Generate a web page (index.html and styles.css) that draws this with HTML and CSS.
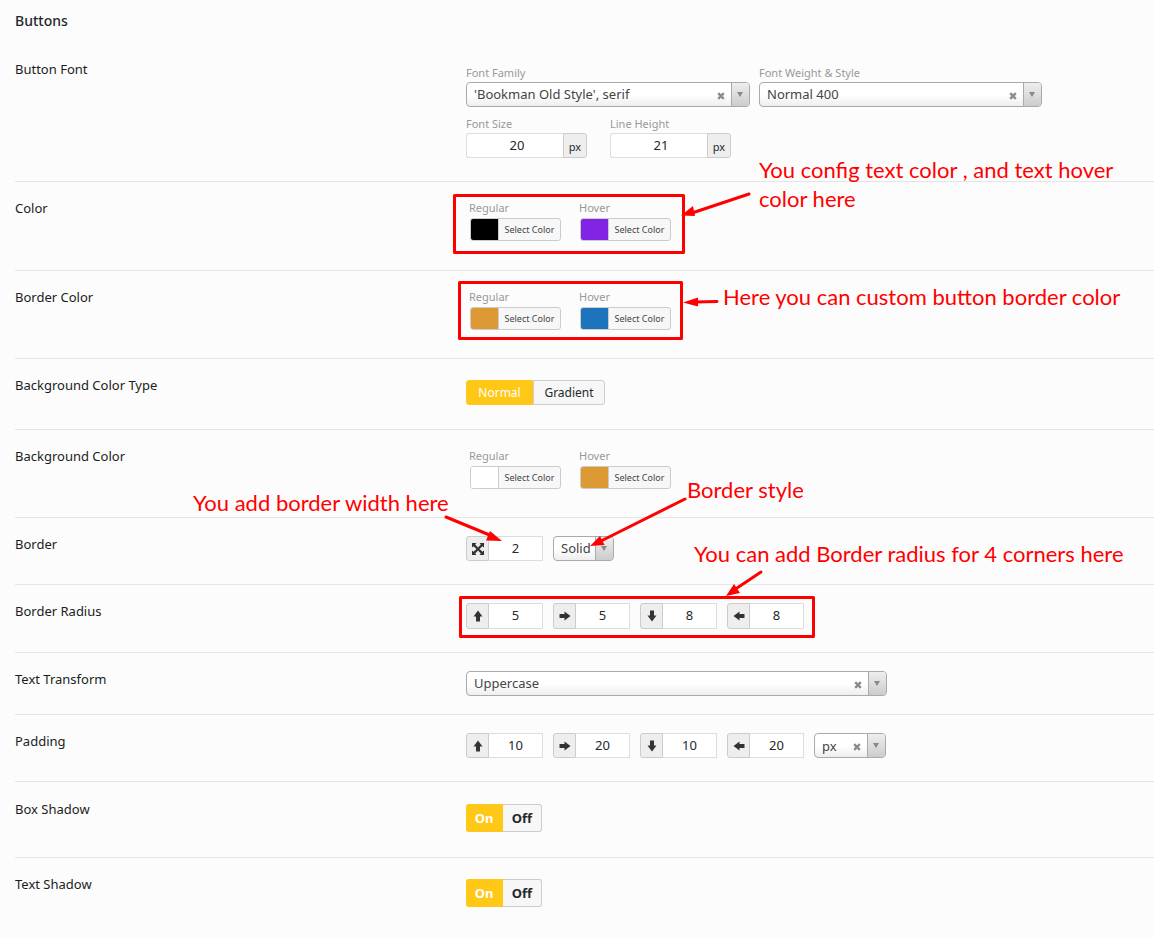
FILE: index.html
```html
<!DOCTYPE html>
<html lang="en">
<head>
<meta charset="utf-8">
<title>Buttons</title>
<link rel="stylesheet" href="styles.css">
</head>
<body>
<svg class="defs" aria-hidden="true">
  <symbol id="arrow" viewBox="0 0 12 12"><path d="M6 .5 10.500 6.500H8v5H4v-5H1.500Z"/></symbol>
  <symbol id="expand" viewBox="0 0 12 12"><path d="M0 0h4.500L3.200 1.500 6 4.500 8.800 1.500 7.500 0H12v4.500L10.500 3.200 7.500 6l3 2.800L12 7.500V12H7.500l1.300-1.500L6 7.500l-2.800 3L4.500 12H0V7.500l1.500 1.300L4.500 6l-3-2.800L0 4.500Z"/></symbol>
  <symbol id="cross" viewBox="0 0 8 8"><path d="M1.200 1.200 6.800 6.800M6.800 1.200 1.200 6.800" stroke="currentColor" stroke-width="2.400"/></symbol>
  <symbol id="caret" viewBox="0 0 6 5"><path d="M0 0h6L3 5Z"/></symbol>
</svg>
<main class="panel">
  <h1 class="title">Buttons</h1>

  <section class="row font-row">
    <h2 class="name">Button Font</h2>
    <div class="fonts">
      <div class="line">
        <div class="field wide">
          <label for="family">Font Family</label>
          <div class="picker"><select id="family"><option>'Bookman Old Style', serif</option></select><button class="clear" aria-label="Clear font family"><svg><use href="#cross"/></svg></button><span class="drop"><svg><use href="#caret"/></svg></span></div>
        </div>
        <div class="field wide">
          <label for="weight">Font Weight &amp; Style</label>
          <div class="picker"><select id="weight"><option>Normal 400</option></select><button class="clear" aria-label="Clear font weight"><svg><use href="#cross"/></svg></button><span class="drop"><svg><use href="#caret"/></svg></span></div>
        </div>
      </div>
      <div class="line sizes">
        <div class="field">
          <label for="size">Font Size</label>
          <div class="unit"><input id="size" value="20"><span>px</span></div>
        </div>
        <div class="field">
          <label for="lh">Line Height</label>
          <div class="unit"><input id="lh" value="21"><span>px</span></div>
        </div>
      </div>
    </div>
  </section>

  <section class="row tall">
    <h2 class="name">Color</h2>
    <div class="colors">
      <div class="field"><span class="cap">Regular</span><button class="color black"><i></i><span>Select Color</span></button></div>
      <div class="field"><span class="cap">Hover</span><button class="color purple"><i></i><span>Select Color</span></button></div>
    </div>
  </section>

  <section class="row">
    <h2 class="name">Border Color</h2>
    <div class="colors">
      <div class="field"><span class="cap">Regular</span><button class="color orange"><i></i><span>Select Color</span></button></div>
      <div class="field"><span class="cap">Hover</span><button class="color blue"><i></i><span>Select Color</span></button></div>
    </div>
  </section>

  <section class="row switch-row">
    <h2 class="name">Background Color Type</h2>
    <div class="toggle"><button class="on">Normal</button><button>Gradient</button></div>
  </section>

  <section class="row">
    <h2 class="name">Background Color</h2>
    <div class="colors">
      <div class="field"><span class="cap">Regular</span><button class="color white"><i></i><span>Select Color</span></button></div>
      <div class="field"><span class="cap">Hover</span><button class="color orange"><i></i><span>Select Color</span></button></div>
    </div>
  </section>

  <section class="row">
    <h2 class="name">Border</h2>
    <div class="group">
      <label class="spin"><span><svg><use href="#expand"/></svg></span><input aria-label="Border width" value="2"></label>
      <div class="picker style"><select aria-label="Border style"><option>Solid</option></select><span class="drop"><svg><use href="#caret"/></svg></span></div>
    </div>
  </section>

  <section class="row">
    <h2 class="name">Border Radius</h2>
    <div class="group radius">
      <label class="spin"><span><svg><use href="#arrow"/></svg></span><input aria-label="Radius top" value="5"></label>
      <label class="spin right"><span><svg><use href="#arrow"/></svg></span><input aria-label="Radius right" value="5"></label>
      <label class="spin down"><span><svg><use href="#arrow"/></svg></span><input aria-label="Radius bottom" value="8"></label>
      <label class="spin left"><span><svg><use href="#arrow"/></svg></span><input aria-label="Radius left" value="8"></label>
    </div>
  </section>

  <section class="row short">
    <h2 class="name">Text Transform</h2>
    <div class="picker transform"><select aria-label="Text transform"><option>Uppercase</option></select><button class="clear" aria-label="Clear text transform"><svg><use href="#cross"/></svg></button><span class="drop"><svg><use href="#caret"/></svg></span></div>
  </section>

  <section class="row">
    <h2 class="name">Padding</h2>
    <div class="group">
      <label class="spin"><span><svg><use href="#arrow"/></svg></span><input aria-label="Padding top" value="10"></label>
      <label class="spin right"><span><svg><use href="#arrow"/></svg></span><input aria-label="Padding right" value="20"></label>
      <label class="spin down"><span><svg><use href="#arrow"/></svg></span><input aria-label="Padding bottom" value="10"></label>
      <label class="spin left"><span><svg><use href="#arrow"/></svg></span><input aria-label="Padding left" value="20"></label>
      <div class="picker px"><select aria-label="Padding unit"><option>px</option></select><button class="clear" aria-label="Clear unit"><svg><use href="#cross"/></svg></button><span class="drop"><svg><use href="#caret"/></svg></span></div>
    </div>
  </section>

  <section class="row shadow-row">
    <h2 class="name">Box Shadow</h2>
    <div class="toggle bold"><button class="on">On</button><button>Off</button></div>
  </section>

  <section class="row shadow-row last">
    <h2 class="name">Text Shadow</h2>
    <div class="toggle bold"><button class="on">On</button><button>Off</button></div>
  </section>
</main>

<svg class="marks" width="1154" height="938" aria-hidden="true">
  <g fill="none" stroke="#f00" stroke-width="3" stroke-linejoin="round">
    <rect x="454.500" y="195.500" width="229" height="57"/>
    <rect x="459.500" y="282.500" width="222" height="56"/>
    <rect x="460.500" y="597.500" width="353" height="39"/>
    <g stroke-linecap="round">
      <path d="M749 194 692 213M717 301.500l-22 .5M446 517l46 19M685 499l-84 42M761 572l-24 16"/>
    </g>
  </g>
  <g fill="#f00">
    <path d="m681 215.500 12-9.500 2 10Z"/>
    <path d="m683 302.500 15-5v9Z"/>
    <path d="m502 541-16-.5 4-9.500Z"/>
    <path d="m590 546 10-10 4.500 9Z"/>
    <path d="m726 596 8-12 6 9Z"/>
  </g>
</svg>
<p class="note n1">You config text color , and text hover<br>color here</p>
<p class="note n2">Here you can custom button border color</p>
<p class="note n3">You add border width here</p>
<p class="note n4">Border style</p>
<p class="note n5">You can add Border radius for 4 corners here</p>
</body>
</html>
```

FILE: styles.css
```css
* { box-sizing: border-box; }
body {
  margin: 0;
  position: relative;
  overflow-x: hidden;
  background: #fcfcfc;
  color: #23282d;
  font: 13px/20px "Noto Sans", "Open Sans", sans-serif;
}
button, input, select { font: inherit; color: inherit; margin: 0; padding: 0; border: 0; background: none; }
svg { display: block; fill: currentColor; }
.defs { display: none; }

.panel { padding: 11px 0 0 15px; }
.title { margin: 0 0 12px; font-size: 14px; line-height: 20px; font-weight: 500; }
.row {
  display: grid;
  grid-template-columns: 451px minmax(0, 1fr);
  align-items: start;
  justify-items: start;
  padding: 18px 0 23px;
  border-bottom: 1px solid #e5e5e5;
}
.name { margin: -2px 0 0; font-size: 13px; line-height: 20px; font-weight: 400; color: #1a1d21; }
.tall { padding-bottom: 24px; }
.short { padding-bottom: 18px; }
.switch-row { padding: 21px 0 24px; }
.switch-row .name { margin-top: -5px; }
.shadow-row { padding: 22px 0 25px; }
.shadow-row .name { margin-top: -5px; }
.last { padding-top: 21px; border-bottom: 0; }
.font-row { padding-top: 22px; }
.font-row .name { margin-top: -6px; }

.line { display: flex; gap: 9px; }
.sizes { gap: 23px; margin-top: 9px; }
.field label, .cap { display: block; font-size: 11px; line-height: 16px; color: #999; }
.fonts .field label { margin-bottom: 1px; }
.wide { width: 284px; }
.wide + .wide { width: 283px; }

.picker {
  display: flex;
  height: 25px;
  border: 1px solid #aaa;
  border-radius: 4px;
  overflow: hidden;
  color: #444;
  background: linear-gradient(#fff 0%, #fff 50%, #eee 100%);
}
.picker select { flex: 1; min-width: 0; padding: 0 0 2px 7px; appearance: none; outline: 0; }
.px select { padding-bottom: 0; }
.clear { width: 20px; padding: 3px 6px 0; color: #8c8c8c; }
.clear svg { width: 8px; height: 8px; }
.drop { display: grid; place-items: center; width: 18px; padding-right: 1px; border-left: 1px solid #aaa; background: linear-gradient(#eee, #ccc); color: #888; }
.drop svg { width: 6px; height: 5px; }
.transform { width: 421px; }
.style { width: 61px; }
.px { width: 72px; }

.unit { display: flex; width: 121px; height: 25px; }
.unit input { flex: 1; min-width: 0; text-align: center; background: #fff; border: 1px solid #ddd; border-right: 0; border-radius: 3px 0 0 3px; padding: 0 0 2px 4px; }
.unit span { width: 24px; text-align: center; font-size: 11px; line-height: 25px; background: #eee; border: 1px solid #ccc; border-radius: 0 3px 3px 0; }

.colors { display: flex; gap: 18px; padding: 0 0 5px 3px; }
.cap { margin-bottom: 2px; }
.color {
  display: flex;
  width: 91px;
  height: 23px;
  margin-left: 1px;
  background: #f7f7f7;
  border: 1px solid #ccc;
  border-radius: 3px;
  overflow: hidden;
}
.color i { width: 28px; height: 21px; border-right: 1px solid #ccc; }
.color span { flex: 1; font-size: 9px; line-height: 21px; color: #444; }
.black i { background: #000; }
.purple i { background: #8224e3; }
.orange i { background: #dd9933; }
.blue i { background: #1e73be; }
.white i { background: #fff; }

.toggle { display: flex; height: 25px; }
.toggle button { width: 72px; border: 1px solid #ccc; border-radius: 0 3px 3px 0; background: #f7f7f7; font-size: 12px; }
.toggle .on { width: 67px; border-color: #ffc817; border-radius: 3px 0 0 3px; background: #ffc817; color: #fff; }
.toggle.bold { height: 28px; }
.bold button { width: 39px; border-left: 0; font-size: 13px; font-weight: 700; }
.bold .on { width: 37px; }

.group { display: flex; gap: 10px; }
.spin { display: flex; width: 77px; height: 25px; }
.radius .spin { height: 26px; }
.spin span { display: grid; place-items: center; width: 23px; background: #eee; border: 1px solid #ccc; border-radius: 3px 0 0 3px; color: #333; }
.spin svg { width: 12px; height: 12px; }
.right svg { transform: rotate(90deg); }
.down svg { transform: rotate(180deg); }
.left svg { transform: rotate(270deg); }
.spin input { flex: 1; min-width: 0; padding-bottom: 2px; text-align: center; background: #fff; border: 1px solid #ddd; border-left: 0; }

.marks { position: absolute; left: 0; top: 0; pointer-events: none; }
.note { position: absolute; margin: 0; white-space: nowrap; color: #f00; font: 400 22px/29px Lato, sans-serif; }
.n1 { left: 759px; top: 155px; }
.n2 { left: 723px; top: 282px; }
.n3 { left: 193px; top: 488px; }
.n4 { left: 687px; top: 475px; }
.n5 { left: 694px; top: 539px; }
```
